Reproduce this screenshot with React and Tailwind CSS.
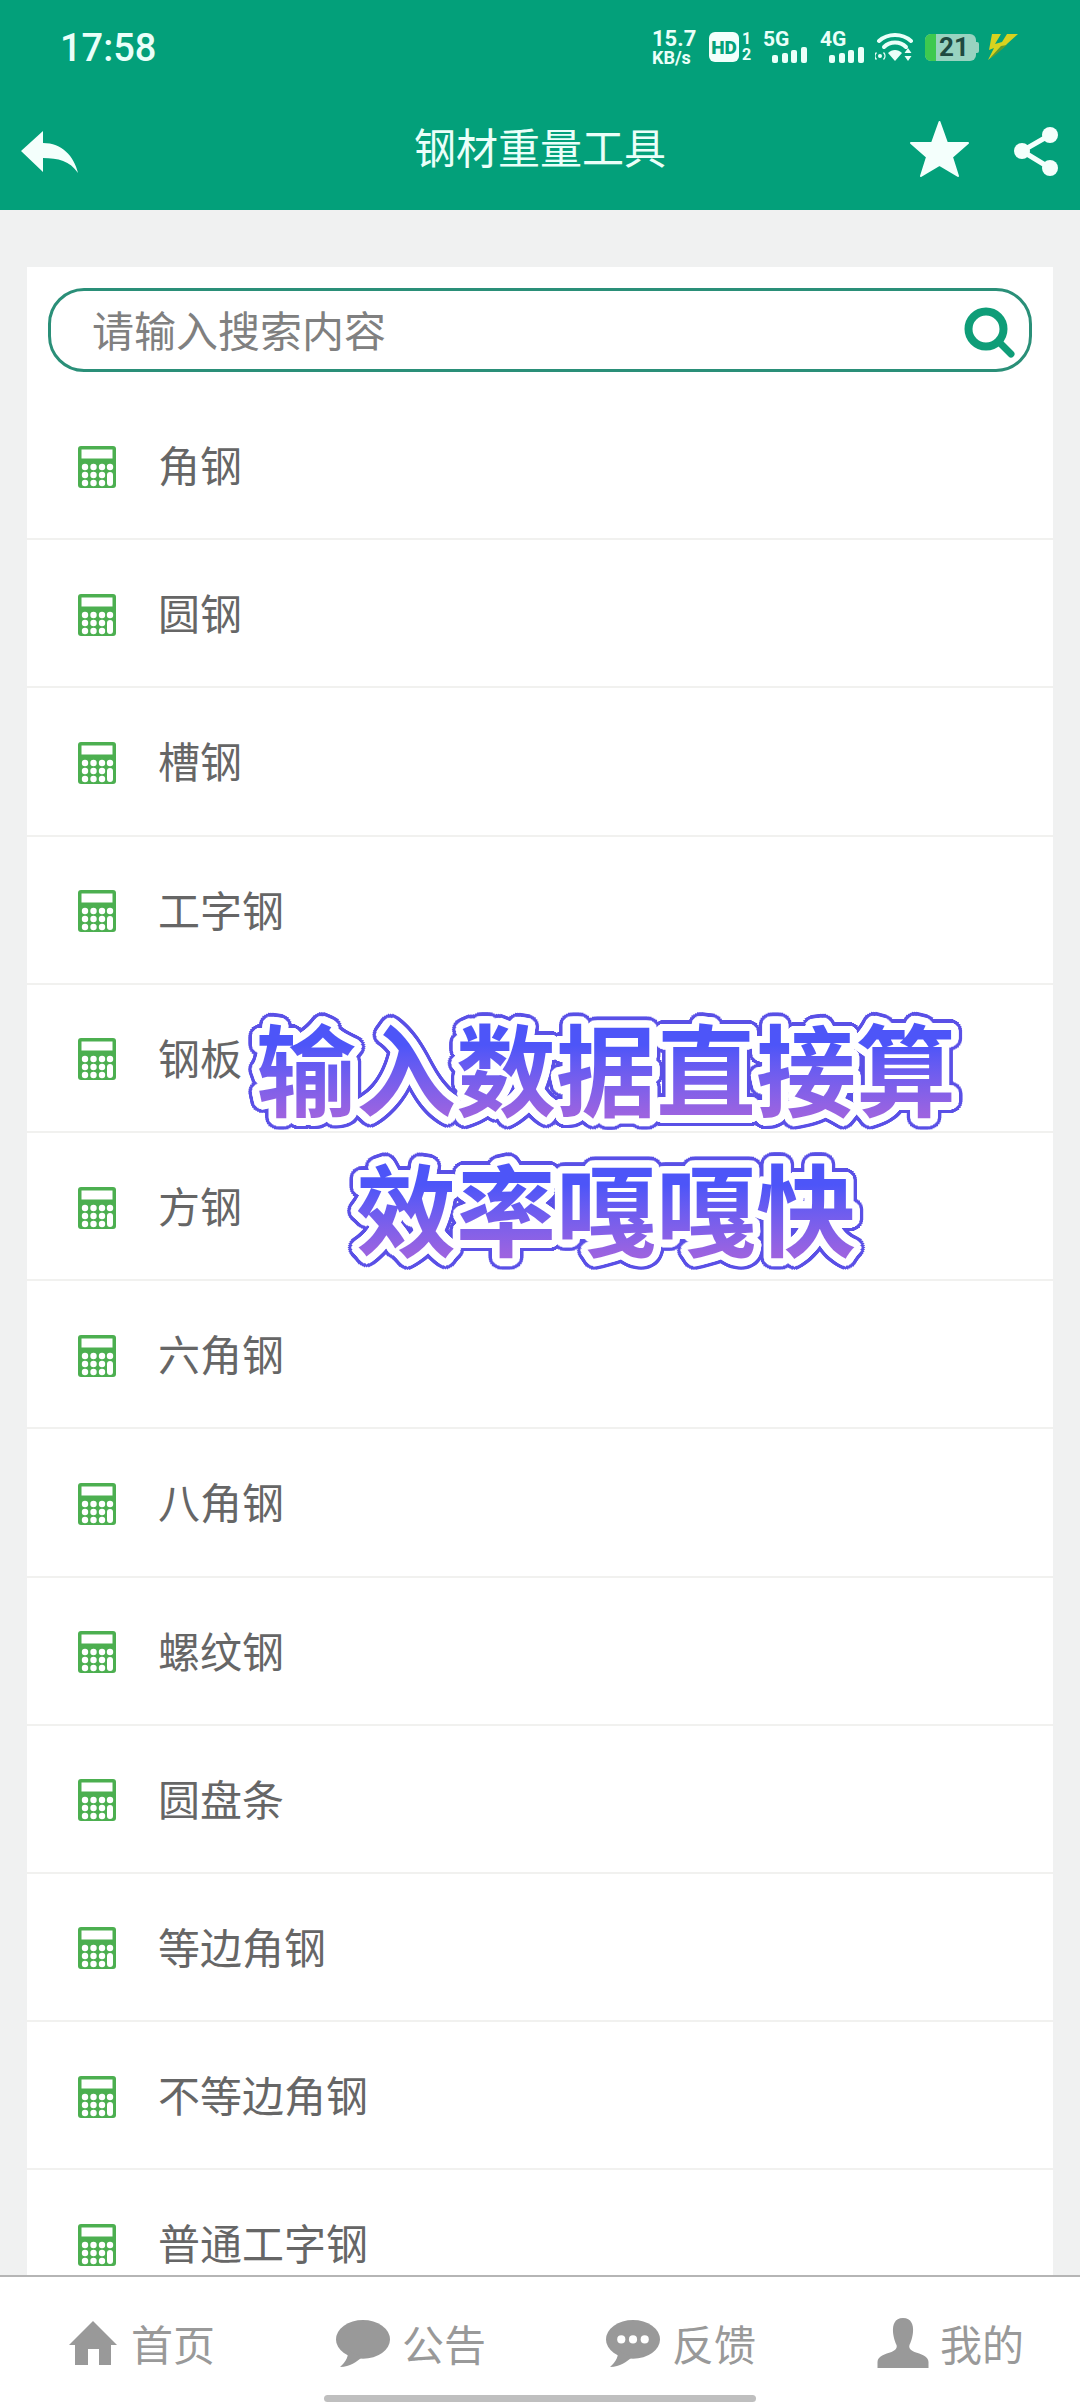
const CJK = '"Noto Sans CJK SC", sans-serif';
const items = ['角钢','圆钢','槽钢','工字钢','钢板','方钢','六角钢','八角钢','螺纹钢','圆盘条','等边角钢','不等边角钢','普通工字钢'];

function ring(r, color) {
  const out = [];
  for (let i = 0; i < 32; i++) {
    const a = (i / 32) * Math.PI * 2;
    out.push(`${(Math.cos(a) * r).toFixed(2)}px ${(Math.sin(a) * r).toFixed(2)}px 0 ${color}`);
  }
  return out;
}
const purpleShadow = [...ring(11, '#5a50e6'), ...ring(7, '#5a50e6'), ...ring(3, '#5a50e6')].join(',');
const whiteShadow = [...ring(7.5, '#ffffff'), ...ring(4, '#ffffff')].join(',');

function Calc() {
  const dots = [[7,21],[15.5,21],[24,21],[32,21],[7,29],[15.5,29],[24,29],[7,37],[15.5,37],[24,37]];
  return (
    <svg width="38" height="42" viewBox="0 0 38 42" className="shrink-0 mt-[3px]">
      <rect width="38" height="42" rx="3" fill="#4caf50" />
      <rect x="3.5" y="3.5" width="31" height="9" fill="#fff" />
      {dots.map(([x,y],i)=><circle key={i} cx={x} cy={y} r="3.2" fill="#fff" />)}
      <rect x="29" y="26" width="6" height="14" rx="3" fill="#fff" />
    </svg>
  );
}

function Signal() {
  return (
    <svg width="35" height="16" viewBox="0 0 35 16" className="ml-[9px]">
      <rect x="0" y="8" width="6" height="8" rx="2" fill="#eafff9"/>
      <rect x="10" y="6" width="6" height="10" rx="2" fill="#eafff9"/>
      <rect x="19" y="3" width="6" height="13" rx="2" fill="#eafff9"/>
      <rect x="29" y="0" width="6" height="16" rx="2" fill="#eafff9"/>
    </svg>
  );
}

function Net({label, className}) {
  return (
    <div className={"flex flex-col w-[44px] h-[31px] " + className}>
      <span className="text-[21px] leading-[15px] font-bold text-[#eafff9] font-['Roboto']">{label}</span>
      <Signal />
    </div>
  );
}

function Overlay({children}) {
  return (
    <div className="grid justify-center h-[140px] items-center text-[100px] leading-[140px] font-bold whitespace-nowrap" style={{fontFamily: CJK}}>
      <span className="[grid-area:1/1] text-[#5a50e6]" style={{textShadow: purpleShadow}}>{children}</span>
      <span className="[grid-area:1/1] text-white" style={{textShadow: whiteShadow}}>{children}</span>
      <span className="[grid-area:1/1] h-[140px] text-transparent bg-clip-text bg-linear-to-b from-[#4d55f8] from-35% to-[#9c63e0] to-85%">{children}</span>
    </div>
  );
}

function Bubble({dots}) {
  return (
    <svg width="54" height="47" viewBox="0 0 53 46" className="mr-[12px]">
      <ellipse cx="26.5" cy="19" rx="26.5" ry="19" fill="#999" />
      <path d="M12 30 C12 38 8 42 4 46 C14 46 20 41 26 36 Z" fill="#999" />
      {dots && <circle cx="15" cy="19" r="4" fill="#fff" />}
      {dots && <circle cx="26.5" cy="19" r="4" fill="#fff" />}
      {dots && <circle cx="38" cy="19" r="4" fill="#fff" />}
    </svg>
  );
}

export default function App() {
  return (
    <div className="relative w-[1080px] h-[2404px] overflow-hidden flex flex-col bg-[#f0f1f1]" style={{fontFamily: CJK}}>
      <header className="h-[210px] shrink-0 bg-[#03a07a] flex flex-col">
        <div className="h-[94px] flex items-center pl-[60px]">
          <span className="text-[38px] leading-none font-medium text-[#eafff9] font-['Roboto'] w-[592px] pt-[2px]">17:58</span>
          <div className="flex flex-col w-[46px] font-['Roboto'] font-bold text-[#eafff9]">
            <span className="text-[22px] leading-[21px]">15.7</span>
            <span className="text-[18px] leading-[18px]">KB/s</span>
          </div>
          <div className="ml-[11px] w-[30px] h-[30px] rounded-[6px] bg-[#f2fffb] flex items-center justify-center">
            <span className="text-[#03a07a] text-[19px] leading-none font-black font-['Roboto']">HD</span>
          </div>
          <div className="ml-[3px] w-[10px] flex flex-col text-[16px] leading-[16px] font-bold font-['Roboto'] text-[#eafff9]">
            <span>1</span><span>2</span>
          </div>
          <Net label="5G" className="ml-[11px]" />
          <Net label="4G" className="ml-[13px]" />
          <svg width="38" height="30" viewBox="0 0 38 30" className="ml-[11px]">
            <g fill="none" stroke="#eafff9" strokeWidth="4" strokeLinecap="round">
              <path d="M4 9 C13 1 27 1 36 9" />
              <path d="M9 15 C15 9 25 9 31 15" />
            </g>
            <path d="M13 21 C17 17 23 17 27 21 L20 29 Z" fill="#eafff9" />
            <circle cx="5" cy="24" r="2" fill="#eafff9" />
            <path d="M1.5 20.5 a5 5 0 0 0 0 7 M8.5 20.5 a5 5 0 0 1 0 7" fill="none" stroke="#eafff9" strokeWidth="1.4" />
            <path d="M33 16 L36.5 21 H29.5 Z M29.5 24 H36.5 L33 29 Z" fill="#eafff9" />
          </svg>
          <div className="ml-[12px] w-[51px] h-[27px] rounded-[6px] bg-[#98d3c0] flex">
            <div className="w-[11px] bg-[#3ec94f] rounded-l-[6px]" />
            <span className="ml-[3px] text-[26px] leading-[27px] font-bold text-[#1f4a40] font-['Roboto']">21</span>
          </div>
          <div className="w-[3px] h-[11px] rounded-r-[2px] bg-[#98d3c0]" />
          <svg width="30" height="27" viewBox="0 0 30 27" className="ml-[9px]">
            <path d="M4 0 H13 L7 10 L14 8 L19 0 H30 L20 9 L16 13 L0 26 L6 14 L1 16 Z" fill="#d8d21f" />
            <path d="M2 24 L13 12 L19 11 L6 22 Z" fill="#5f9a2e" />
          </svg>
        </div>
        <div className="flex-1 relative flex items-center justify-center pb-[12px]">
          <span className="text-[42px] leading-none text-[#eafff9]">钢材重量工具</span>
          <svg width="1080" height="116" viewBox="0 94 1080 116" className="absolute inset-0">
            <path d="M21 151 L43 131 V143 C62 143 74 156 78 173 C70 161 58 158 43 158 V172 Z" fill="#f4fffc" />
            <path d="M939.5 122 L947 143 H968 L952 157 L958 176 L939.5 165 L921 176 L927 157 L911 143 H932 Z" fill="#f4fffc" stroke="#f4fffc" strokeWidth="2" strokeLinejoin="round" />
            <g stroke="#f4fffc" strokeWidth="5"><path d="M1050 135 L1022 151 L1050 168" fill="none"/></g>
            <circle cx="1050" cy="135" r="8" fill="#f4fffc"/>
            <circle cx="1022" cy="151" r="8" fill="#f4fffc"/>
            <circle cx="1050" cy="168" r="8" fill="#f4fffc"/>
          </svg>
        </div>
      </header>

      <main className="flex-1 min-h-0 overflow-hidden pt-[57px] px-[27px]">
        <div className="bg-white">
          <div className="h-[125px] pt-[21px] px-[21px]">
            <div className="h-[84px] rounded-[36px] border-[3px] border-[#2a8f78] flex items-center pl-[41px] pr-[13px] justify-between">
              <span className="text-[42px] leading-none text-[#808080] -mt-[3px]">请输入搜索内容</span>
              <svg width="52" height="52" viewBox="0 0 52 52" className="mt-[6px]">
                <circle cx="22" cy="22" r="17.5" fill="none" stroke="#0f9d78" strokeWidth="8" />
                <path d="M35 35 L47 47" stroke="#0f9d78" strokeWidth="7" strokeLinecap="round" />
              </svg>
            </div>
          </div>
          {items.map((t) => (
            <div key={t} className="h-[148.2px] box-border border-b-2 border-[#f1f1ef] flex items-center pl-[51px]">
              <Calc />
              <span className="ml-[42px] text-[42px] leading-none text-[#666666] -mt-[2px]">{t}</span>
            </div>
          ))}
        </div>
      </main>

      <footer className="h-[129px] shrink-0 relative bg-white border-t-2 border-[#b5b5b5] flex items-start pl-[69px] pt-[42px] text-[42px] leading-[48px] text-[#999999]">
        <div className="flex items-center h-[48px]">
          <svg width="48" height="44" viewBox="0 0 48 44" className="mr-[14px]">
            <path d="M24 0 L48 24 H42 V44 H30 V28 H19 V44 H6 V24 H0 Z" fill="#999" />
          </svg>
          <span>首页</span>
        </div>
        <div className="flex items-center h-[48px] ml-[121px]">
          <Bubble />
          <span>公告</span>
        </div>
        <div className="flex items-center h-[48px] ml-[120px]">
          <Bubble dots />
          <span>反馈</span>
        </div>
        <div className="flex items-center h-[48px] ml-[121px]">
          <svg width="52" height="50" viewBox="0 0 51 50" className="mr-[11px]">
            <path d="M25.5 0 C34 0 36 7 35.5 14 C35 20 33 25 32 27 C31 30 33 32 37 34 C43 36 51 38 51 44 V50 H0 V44 C0 38 8 36 14 34 C18 32 20 30 19 27 C18 25 16 20 15.5 14 C15 7 17 0 25.5 0 Z" fill="#999" />
          </svg>
          <span>我的</span>
        </div>
        <div className="absolute left-[324px] top-[118px] w-[432px] h-[7px] rounded-full bg-[#bfbfbf]" />
      </footer>

      <div className="absolute left-[252px] top-[996px] w-[708px]">
        <Overlay>输入数据直接算</Overlay>
        <Overlay>效率嘎嘎快</Overlay>
      </div>
    </div>
  );
}
